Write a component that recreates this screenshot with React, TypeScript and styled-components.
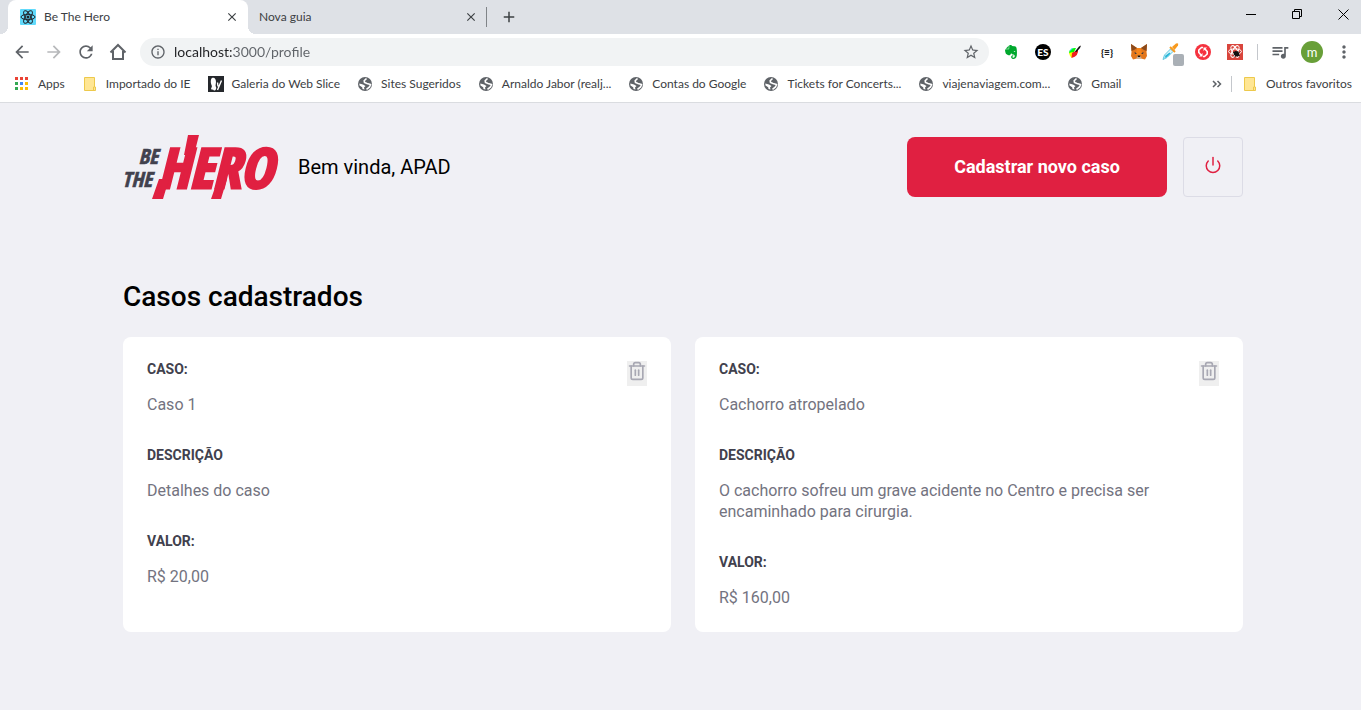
import React from "react";
import styled, { createGlobalStyle, css } from "styled-components";
import { FiPower, FiTrash2 } from "react-icons/fi";
import { FaEvernote } from "react-icons/fa";
import {
  MdAdd,
  MdArrowBack,
  MdArrowForward,
  MdClose,
  MdMoreVert,
  MdOutlineInfo,
  MdQueueMusic,
  MdRefresh,
  MdStarBorder,
} from "react-icons/md";

const GlobalStyle = createGlobalStyle`
  * { margin: 0; padding: 0; box-sizing: border-box; }
  html, body, #root { min-height: 100%; }
  body { background: #f0f0f5; font-family: Roboto, "Liberation Sans", sans-serif; }
  button { font: inherit; border: 0; background: none; cursor: pointer; color: inherit; }
  a { color: inherit; text-decoration: none; }
  svg { display: block; flex: none; }
`;

/* ---------- browser frame ---------- */

const Browser = styled.header`
  background: #fff;
  border-bottom: 1px solid #dadce0;
  font-family: Lato, "Open Sans", sans-serif;
  font-size: 12px;
  color: #3c4043;
`;

const TabStrip = styled.div`
  display: flex;
  align-items: stretch;
  height: 34px;
  padding-left: 8px;
  background: #dee1e6;
`;

const Tab = styled.div<{ $active?: boolean }>`
  position: relative;
  display: flex;
  align-items: center;
  gap: 8px;
  width: 238px;
  padding: 0 7px 0 11px;
  ${({ $active }) =>
    $active &&
    css`
      width: 240px;
      padding: 0 8px 0 12px;
      background: #fff;
      border-radius: 8px 8px 0 0;
      &::before,
      &::after {
        content: "";
        position: absolute;
        bottom: 0;
        width: 8px;
        height: 8px;
      }
      &::before {
        right: 100%;
        background: radial-gradient(circle at 0 0, transparent 8px, #fff 8px);
      }
      &::after {
        left: 100%;
        background: radial-gradient(circle at 100% 0, transparent 8px, #fff 8px);
      }
    `}
`;

const TabTitle = styled.button`
  flex: 1;
  padding-bottom: 2px;
  text-align: left;
  white-space: nowrap;
`;

const TabClose = styled.button`
  display: grid;
  place-items: center;
  width: 16px;
  height: 16px;
`;

const TabDivider = styled.span`
  align-self: center;
  width: 1px;
  height: 20px;
  margin-right: 13px;
  background: #808488;
`;

const NewTab = styled.button`
  align-self: center;
`;

const WindowControls = styled.div`
  display: flex;
  margin-left: auto;
  height: 28px;
`;

const WindowButton = styled.button<{ $last?: boolean }>`
  display: grid;
  place-items: center;
  width: ${({ $last }) => ($last ? 41 : 46)}px;
  padding-left: ${({ $last }) => ($last ? 5 : 0)}px;
  color: #000;
`;

const Toolbar = styled.div`
  display: flex;
  align-items: center;
  height: 36px;
  padding: 0 1px 0 6px;
  color: #5f6368;
`;

const ToolButton = styled.button<{ $muted?: boolean }>`
  display: grid;
  place-items: center;
  width: 32px;
  height: 28px;
  opacity: ${({ $muted }) => ($muted ? 0.45 : 1)};
`;

const AddressBar = styled.form`
  display: flex;
  flex: 1;
  align-items: center;
  gap: 8px;
  height: 28px;
  margin: 0 6px;
  padding: 0 9px 0 10px;
  border-radius: 14px;
  background: #f1f3f4;
`;

const AddressInput = styled.input`
  flex: 1;
  min-width: 0;
  border: 0;
  outline: 0;
  font-family: inherit;
  font-size: 14px;
  line-height: 20px;
  color: #5f6368;
  background: linear-gradient(to right, #202124 58px, #5f6368 58px);
  background-clip: text;
  -webkit-text-fill-color: transparent;
`;

const Divider = styled.span<{ $gap: number }>`
  width: 1px;
  height: 16px;
  margin: 0 ${({ $gap }) => $gap}px;
  background: #c4c7cc;
`;

const Avatar = styled.span`
  display: grid;
  place-items: center;
  width: 22px;
  height: 22px;
  border-radius: 50%;
  background: #689f38;
  color: #fff;
  font-size: 13px;
  line-height: 20px;
`;

const JsonMark = styled.span`
  font-size: 10px;
  font-weight: 900;
  color: #202124;
`;

const EsMark = styled.span`
  display: grid;
  place-items: center;
  width: 16px;
  height: 16px;
  border-radius: 50%;
  background: #000;
  color: #fff;
  font-size: 10px;
  font-weight: 900;
`;

const Bookmarks = styled.nav`
  display: flex;
  align-items: center;
  height: 32px;
  padding: 0 0 4px 6px;
  white-space: nowrap;
`;

const Bookmark = styled.a`
  display: flex;
  align-items: center;
  gap: 8px;
  padding: 0 9px 0 8px;
  svg {
    color: #5f6368;
  }
`;

const BookmarkLabel = styled.span`
  padding-bottom: 2px;
`;

const Overflow = styled.button`
  margin-left: auto;
  padding: 0 7px 0 4px;
  color: #5f6368;
`;

/* ---------- profile page ---------- */

const Profile = styled.main`
  max-width: 1181px;
  margin: 32px auto;
  padding: 0 28px 0 33px;
`;

const ProfileHeader = styled.header`
  display: flex;
  align-items: center;
  height: 64px;
`;

const Welcome = styled.span`
  margin-left: 24px;
  font-size: 20px;
  line-height: 24px;
  color: #000;
`;

const NewCase = styled.a`
  width: 260px;
  height: 60px;
  margin-left: auto;
  border-radius: 8px;
  background: #e02041;
  color: #fff;
  font-size: 18px;
  font-weight: 700;
  line-height: 60px;
  text-align: center;
`;

const Logout = styled.button`
  display: grid;
  place-items: center;
  width: 60px;
  height: 60px;
  margin-left: 16px;
  padding-bottom: 4px;
  border: 1px solid #dcdce6;
  border-radius: 4px;
  color: #e02041;
`;

const Title = styled.h1`
  margin: 80px 0 22px;
  font-size: 28px;
  font-weight: 500;
  line-height: 36px;
  color: #000;
`;

const CaseGrid = styled.ul`
  display: grid;
  grid-template-columns: repeat(2, 1fr);
  gap: 24px;
  list-style: none;
`;

const CaseCard = styled.li`
  position: relative;
  padding: 24px;
  border-radius: 8px;
  background: #fff;
`;

const CaseLabel = styled.strong`
  display: block;
  font-size: 14px;
  font-weight: 700;
  line-height: 17px;
  color: #41414d;
`;

const CaseText = styled.p`
  margin-top: 16px;
  font-size: 16px;
  line-height: 21px;
  color: #737380;
  & + ${CaseLabel} {
    margin-top: 32px;
  }
`;

const DeleteCase = styled.button`
  position: absolute;
  top: 24px;
  right: 24px;
  padding-bottom: 5px;
  background: #efefef;
  color: #a8a8b3;
`;

/* ---------- drawings ---------- */

const Logo = () => (
  <svg
    width="151"
    height="64"
    viewBox="0 0 151 64"
    role="img"
    aria-label="Be The Hero"
    overflow="visible"
    fontFamily='"Open Sans Condensed", "Roboto Condensed", sans-serif'
    fontStyle="italic"
    fontWeight="700"
  >
    <g fill="#41414d" stroke="#41414d" strokeWidth="0.6" fontSize="21">
      <text x="35" y="29" textAnchor="end">BE</text>
      <text x="29" y="52" textAnchor="end">THE</text>
    </g>
    <g fill="#e02041" stroke="#e02041">
      <text x="35" y="53" fontSize="55" strokeWidth="3">HERO</text>
      <path stroke="none" d="M65 0H76L71 20H61ZM36 44H46L40 64H29ZM95 44H104L98 64H88Z" />
    </g>
  </svg>
);

const ReactFavicon = () => (
  <svg width="16" height="16" viewBox="0 0 16 16">
    <rect width="16" height="16" rx="1" fill="#61dafb" />
    <g fill="none" stroke="#20232a" strokeWidth="1">
      <ellipse cx="8" cy="8" rx="7" ry="2.700" />
      <ellipse cx="8" cy="8" rx="7" ry="2.700" transform="rotate(60 8 8)" />
      <ellipse cx="8" cy="8" rx="7" ry="2.700" transform="rotate(120 8 8)" />
    </g>
    <circle cx="8" cy="8" r="1.500" fill="#20232a" />
  </svg>
);

const HomeIcon = () => (
  <svg width="18" height="18" viewBox="0 0 18 18" fill="none" stroke="currentColor" strokeWidth="2">
    <path d="M1.500 9.500 9 2l7.500 7.500M4 8v8h10V8" />
  </svg>
);

const GlobeIcon = () => (
  <svg width="16" height="16" viewBox="0 0 16 16">
    <circle cx="8" cy="8" r="7" fill="currentColor" />
    <path
      d="M9.500 2.500 7.200 4.700 7.500 6.500 10 7.500 13.500 8.500 12.500 11 9.500 13.300"
      fill="none"
      stroke="#fff"
      strokeWidth="1.600"
    />
    <path d="M2.300 7.500 6 8.500 8.500 10 7 11.500 7.500 13.500 5.500 13 5.200 11.200 2.500 9.500z" fill="#fff" />
  </svg>
);

const AppsIcon = () => {
  const dots = ["#ea4335", "#ea4335", "#ea4335", "#34a853", "#4285f4", "#fbbc05", "#34a853", "#fbbc05", "#fbbc05"];
  return (
    <svg width="16" height="16" viewBox="0 0 16 16">
      {dots.map((fill, i) => (
        <rect key={i} x={1 + (i % 3) * 5} y={1 + Math.floor(i / 3) * 5} width="3" height="3" fill={fill} />
      ))}
    </svg>
  );
};

const FolderIcon = () => (
  <svg width="16" height="16" viewBox="0 0 16 16">
    <path d="M2.500 1.500h10v9.500h1v3.500h-11z" fill="#ffe694" stroke="#edc94c" />
    <path d="M11.500 14v-3h1" fill="none" stroke="#edc94c" />
  </svg>
);

const SliceIcon = () => (
  <svg width="16" height="16" viewBox="0 0 16 16">
    <rect width="16" height="16" fill="#25282c" />
    <path
      d="M4 2c2.500-1 4 1 4 4l-.5 4c1 1 1 3 0 4-1 1-2 .5-2.500-.5C3.500 14 2.500 13 3.500 11.500c.5-1 .5-1.500 0-2.500C2.500 6.500 2.500 3 4 2z"
      fill="#fff"
    />
    <path d="M13.500 4.500 9.500 14M9.500 6.500l.5 4" fill="none" stroke="#fff" strokeWidth="1.400" />
  </svg>
);

const BirdIcon = () => (
  <svg width="16" height="16" viewBox="0 0 16 16">
    <path d="M2 8Q4 3.500 9 4L7 8 4 11Q2 10 2 8z" fill="#0f0" />
    <path d="M2 9 6 8 5 14 3 12z" fill="#ff0" />
    <path d="M5 9 11 5.500Q12 12 4.500 14z" fill="#f02020" />
    <path d="M8 7.500 12 2.500l2-1-1 2.500-3.500 4z" fill="#111" />
    <path d="M2.500 7 5 4l1 .5-3 3z" fill="#20d8e8" />
  </svg>
);

const FoxIcon = () => (
  <svg width="18" height="16" viewBox="0 0 18 16">
    <path d="M1 0 7 4h4l6-4-.5 8 .5 4-2 3.500-4-1H7l-4 1L1 12l.5-4z" fill="#e2761b" />
    <path d="M1 0 7 4 4 6 1.500 7zM17 0l-6 4 3 2 2.500 1z" fill="#8a4a1c" />
    <path d="M7 4h4l1 6-1.500 3h-3L6 10z" fill="#f6851b" />
    <path d="M4.500 8 7 9.500 5 10zM13.500 8 11 9.500l2 .5z" fill="#233447" />
    <path d="M7 12.500h4l.5 2h-5z" fill="#c0ad9e" />
    <path d="M7.500 11.500h3l-.5 1.500H8z" fill="#161616" />
  </svg>
);

const DropperIcon = () => (
  <svg width="26" height="28" viewBox="0 0 26 28">
    <path d="M5 21.500 6.500 17l6-6 2.500 2.500-6 6z" fill="#d9f4fb" stroke="#62c8e0" />
    <path d="m6.500 20 1-2.500 4-3 1 1-3.500 3.500z" fill="#29b6d8" />
    <path d="m14 9 4-3.500q3-1 2 2L16.500 12z" fill="#f79a1e" />
    <path d="m12 9 5 5" stroke="#f79a1e" strokeWidth="2" />
    <rect x="15" y="16" width="11" height="12" rx="2" fill="#aab0b6" />
  </svg>
);

const SyncIcon = () => (
  <svg width="16" height="16" viewBox="0 0 16 16">
    <circle cx="8" cy="8" r="8" fill="#f5333f" />
    <g fill="none" stroke="#fff" strokeWidth="1.600">
      <path d="M8 3.500H6.500L3.800 6v2.500L6 11" />
      <path d="M8 12.500h1.500l2.700-2.500V7.500L10 5" />
    </g>
    <path d="M7.500 9v3.500H4zM8.500 7V3.500H12z" fill="#fff" />
  </svg>
);

const ReactBugIcon = () => (
  <svg width="16" height="16" viewBox="0 0 16 16">
    <rect width="16" height="16" fill="#d9453c" />
    <g fill="none" stroke="#fff">
      <ellipse cx="8" cy="7.500" rx="6.500" ry="2.600" />
      <ellipse cx="8" cy="7.500" rx="6.500" ry="2.600" transform="rotate(60 8 7.500)" />
      <ellipse cx="8" cy="7.500" rx="6.500" ry="2.600" transform="rotate(120 8 7.500)" />
    </g>
    <ellipse cx="9.500" cy="9.800" rx="3" ry="2.300" fill="#111" transform="rotate(35 9.500 9.800)" />
    <path d="m6 8 7 4M8 13l3-6M6.500 11l6-2.500" stroke="#111" />
  </svg>
);

const MinimizeIcon = () => (
  <svg width="10" height="10" viewBox="0 0 10 10" stroke="currentColor">
    <path d="M0 5.500h10" />
  </svg>
);

const RestoreIcon = () => (
  <svg width="10" height="10" viewBox="0 0 10 10" fill="none" stroke="currentColor">
    <path d="M.5 2.500h7v7h-7zM2.500 2.500v-2h7v7h-2" />
  </svg>
);

const CloseIcon = () => (
  <svg width="11" height="11" viewBox="0 0 11 11" stroke="currentColor">
    <path d="m.5.5 10 10M10.500.5l-10 10" />
  </svg>
);

/* ---------- content ---------- */

const extensions = [
  { name: "Evernote", icon: <FaEvernote size={16} color="#00a82d" /> },
  { name: "ES", icon: <EsMark>ES</EsMark> },
  { name: "Colibri", icon: <BirdIcon /> },
  { name: "JSON", icon: <JsonMark>{"{≡}"}</JsonMark> },
  { name: "MetaMask", icon: <FoxIcon /> },
  { name: "ColorZilla", icon: <DropperIcon /> },
  { name: "Sync", icon: <SyncIcon /> },
  { name: "React Developer Tools", icon: <ReactBugIcon /> },
];

const globe = <GlobeIcon />;

const bookmarks = [
  { label: "Apps", icon: <AppsIcon /> },
  { label: "Importado do IE", icon: <FolderIcon /> },
  { label: "Galeria do Web Slice", icon: <SliceIcon /> },
  { label: "Sites Sugeridos", icon: globe },
  { label: "Arnaldo Jabor (realj...", icon: globe },
  { label: "Contas do Google", icon: globe },
  { label: "Tickets for Concerts...", icon: globe },
  { label: "viajenaviagem.com...", icon: globe },
  { label: "Gmail", icon: globe },
];

const cases = [
  { title: "Caso 1", description: "Detalhes do caso", value: "R$ 20,00" },
  {
    title: "Cachorro atropelado",
    description: "O cachorro sofreu um grave acidente no Centro e precisa ser encaminhado para cirurgia.",
    value: "R$ 160,00",
  },
];

export default function App() {
  return (
    <>
      <GlobalStyle />
      <Browser>
        <TabStrip>
          <Tab $active>
            <ReactFavicon />
            <TabTitle>Be The Hero</TabTitle>
            <TabClose aria-label="Fechar guia"><MdClose size={14} stroke="currentColor" /></TabClose>
          </Tab>
          <Tab>
            <TabTitle>Nova guia</TabTitle>
            <TabClose aria-label="Fechar guia"><MdClose size={14} stroke="currentColor" /></TabClose>
          </Tab>
          <TabDivider />
          <NewTab aria-label="Abrir nova guia"><MdAdd size={18} stroke="currentColor" /></NewTab>
          <WindowControls>
            <WindowButton aria-label="Minimizar"><MinimizeIcon /></WindowButton>
            <WindowButton aria-label="Restaurar"><RestoreIcon /></WindowButton>
            <WindowButton $last aria-label="Fechar"><CloseIcon /></WindowButton>
          </WindowControls>
        </TabStrip>
        <Toolbar>
          <ToolButton aria-label="Voltar"><MdArrowBack size={20} /></ToolButton>
          <ToolButton $muted aria-label="Avançar"><MdArrowForward size={20} /></ToolButton>
          <ToolButton aria-label="Recarregar"><MdRefresh size={20} /></ToolButton>
          <ToolButton aria-label="Página inicial"><HomeIcon /></ToolButton>
          <AddressBar onSubmit={(e) => e.preventDefault()}>
            <MdOutlineInfo size={16} />
            <AddressInput aria-label="Endereço" defaultValue="localhost:3000/profile" />
            <MdStarBorder size={18} />
          </AddressBar>
          {extensions.map(({ name, icon }) => (
            <ToolButton key={name} aria-label={name}>{icon}</ToolButton>
          ))}
          <Divider $gap={6} />
          <ToolButton aria-label="Mídia"><MdQueueMusic size={20} /></ToolButton>
          <ToolButton aria-label="Perfil"><Avatar>m</Avatar></ToolButton>
          <ToolButton aria-label="Menu"><MdMoreVert size={20} /></ToolButton>
        </Toolbar>
        <Bookmarks>
          {bookmarks.map(({ label, icon }) => (
            <Bookmark key={label} href="#">{icon}<BookmarkLabel>{label}</BookmarkLabel></Bookmark>
          ))}
          <Overflow aria-label="Mais favoritos">
            <svg width="10" height="8" viewBox="0 0 10 8" fill="none" stroke="currentColor" strokeWidth="1.500">
              <path d="m1 1 3 3-3 3M5.500 1l3 3-3 3" />
            </svg>
          </Overflow>
          <Divider $gap={2} />
          <Bookmark href="#"><FolderIcon /><BookmarkLabel>Outros favoritos</BookmarkLabel></Bookmark>
        </Bookmarks>
      </Browser>

      <Profile>
        <ProfileHeader>
          <Logo />
          <Welcome>Bem vinda, APAD</Welcome>
          <NewCase href="#">Cadastrar novo caso</NewCase>
          <Logout aria-label="Sair"><FiPower size={18} /></Logout>
        </ProfileHeader>
        <Title>Casos cadastrados</Title>
        <CaseGrid>
          {cases.map(({ title, description, value }) => (
            <CaseCard key={title}>
              <CaseLabel>CASO:</CaseLabel>
              <CaseText>{title}</CaseText>
              <CaseLabel>DESCRIÇÃO</CaseLabel>
              <CaseText>{description}</CaseText>
              <CaseLabel>VALOR:</CaseLabel>
              <CaseText>{value}</CaseText>
              <DeleteCase aria-label="Excluir caso"><FiTrash2 size={20} /></DeleteCase>
            </CaseCard>
          ))}
        </CaseGrid>
      </Profile>
    </>
  );
}
